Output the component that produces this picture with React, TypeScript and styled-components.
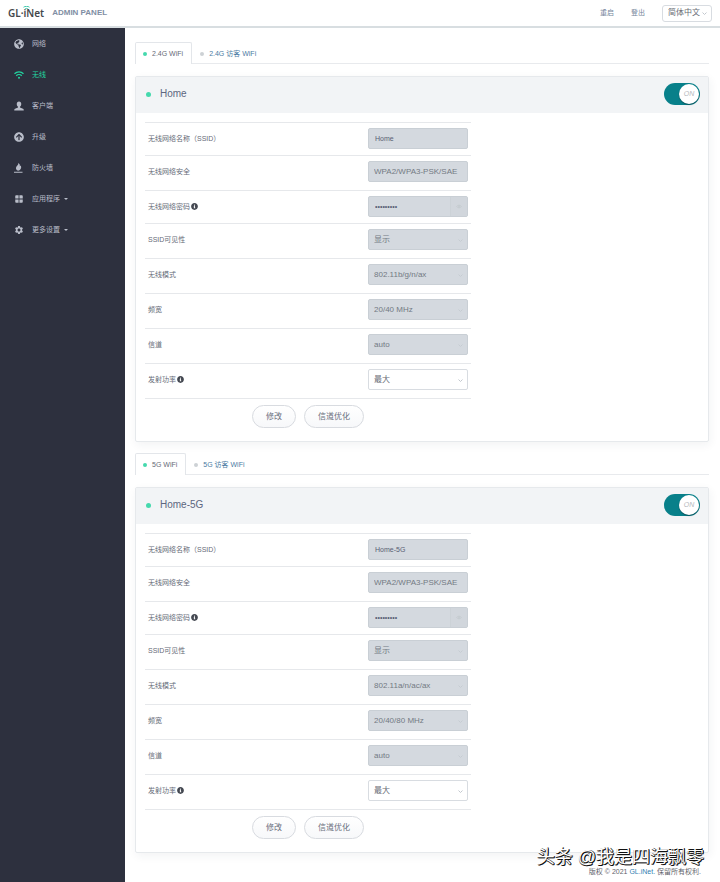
import React, { useState } from "react";
import styled, { createGlobalStyle, css } from "styled-components";
import { FaGlobeAmericas, FaArrowCircleUp, FaInfoCircle } from "react-icons/fa";
import { MdSettings, MdWindow } from "react-icons/md";

const GlobalStyle = createGlobalStyle`
  *, *::before, *::after { box-sizing: border-box; }
  body {
    margin: 0;
    background: #fff;
    color: #666b7c;
    font-family: "Liberation Sans", "Noto Sans CJK SC", sans-serif;
    font-size: 7px;
    line-height: 10px;
  }
  a { text-decoration: none; color: inherit; }
  button, input, select { font: inherit; color: inherit; margin: 0; }
`;

const Page = styled.div`
  position: relative;
  min-height: 100vh;
  display: flex;
  flex-direction: column;
`;

const TopBar = styled.header`
  display: flex;
  align-items: center;
  height: 28px;
  padding: 0 8px;
  background: #fff;
  border-bottom: 2px solid #d8dee1;
`;

const Logo = styled.a`
  position: relative;
  font-family: "Noto Sans", sans-serif;
  font-size: 10px;
  line-height: 12px;
  font-weight: 600;
  color: #44474b;
`;

const Signal = styled.svg`
  position: absolute;
  left: 15px;
  top: -1px;
  width: 7px;
  height: 4px;
`;

const PanelName = styled.span`
  margin-left: 8px;
  font-size: 8px;
  font-weight: 700;
  color: #7f8ea3;
`;

const TopLinks = styled.nav`
  display: flex;
  align-items: center;
  gap: 17px;
  margin-left: auto;
  color: #75859b;
`;

const SelectBox = styled.span<{ $size?: "top" }>`
  position: relative;
  display: block;
  ${(p) => p.$size === "top" && css`width: 50px;`}
`;

const Chevron = styled.svg`
  position: absolute;
  right: 5px;
  top: 50%;
  width: 5px;
  height: 3px;
  margin-top: -1px;
  pointer-events: none;
`;

const Select = styled.select<{ $size?: "top" }>`
  appearance: none;
  display: block;
  width: 100%;
  height: ${(p) => (p.$size === "top" ? "17px" : "21px")};
  padding: 0 0 0 5px;
  border: 1px solid #d8dce1;
  border-radius: ${(p) => (p.$size === "top" ? "3px" : "2px")};
  background: #fff;
  color: #686c75;
  font-size: 8px;
  opacity: 1;
  &:disabled {
    background: #d4d9df;
    border-color: #c9cfd5;
    color: #737983;
  }
`;

const Shell = styled.div`
  flex: 1;
  display: grid;
  grid-template-columns: 125px minmax(0, 1fr);
`;

const SideBar = styled.nav`
  background: #2d303e;
`;

const SideLink = styled.a<{ $active?: boolean }>`
  display: flex;
  align-items: center;
  height: 31px;
  padding-left: 14px;
  gap: 8px;
  color: ${(p) => (p.$active ? "#22d4a0" : "#b9bdc9")};
  svg { width: 10px; height: 10px; flex: none; }
`;

const Caret = styled.i`
  border: 2px solid transparent;
  border-top-color: currentColor;
  border-bottom: 0;
  margin-left: -4px;
`;

const Main = styled.main`
  display: flex;
  flex-direction: column;
  padding: 14px 11px 0 10px;
`;

const Tabs = styled.div`
  display: flex;
  height: 22px;
  border-bottom: 1px solid #e8eaed;
  margin-bottom: 12px;
`;

const Tab = styled.button<{ $active?: boolean }>`
  display: flex;
  align-items: center;
  gap: 5px;
  height: 22px;
  padding: 0 8px 0 7px;
  border: 1px solid transparent;
  border-bottom: 0;
  border-radius: 2px 2px 0 0;
  background: transparent;
  color: #4b7ba3;
  cursor: pointer;
  ${(p) => p.$active && css`
    background: #fff;
    border-color: #e3e6ea;
    color: #666b76;
  `}
`;

const Dot = styled.span<{ $on?: boolean; $large?: boolean }>`
  flex: none;
  width: ${(p) => (p.$large ? "5px" : "4px")};
  height: ${(p) => (p.$large ? "5px" : "4px")};
  border-radius: 50%;
  background: ${(p) => (p.$on ? "#45d9ad" : "#cdd1d5")};
`;

const Card = styled.section`
  border: 1px solid #e6e9ec;
  border-radius: 2px;
  box-shadow: 1px 3px 10px rgba(40, 50, 70, 0.06);
  margin-bottom: 11px;
`;

const CardHead = styled.header`
  display: flex;
  align-items: center;
  gap: 9px;
  height: 36px;
  padding: 0 8px 2px 10px;
  background: #f2f4f6;
`;

const CardTitle = styled.h2`
  margin: 0;
  font-size: 10px;
  line-height: 14px;
  font-weight: 400;
  color: #5d6680;
`;

const Switch = styled.label`
  position: relative;
  display: block;
  width: 36px;
  height: 22px;
  margin-left: auto;
  cursor: pointer;
`;

const SwitchInput = styled.input`
  appearance: none;
  display: block;
  width: 36px;
  height: 22px;
  border-radius: 11px;
  background: #a9b1b8;
  cursor: pointer;
  &:checked { background: #08808a; }
`;

const Knob = styled.span<{ $on: boolean }>`
  position: absolute;
  top: 1px;
  left: ${(p) => (p.$on ? "15px" : "1px")};
  width: 20px;
  height: 20px;
  border-radius: 50%;
  background: #fff;
  box-shadow: 0 1px 1px rgba(0, 35, 45, 0.5);
  color: #b4b8bc;
  font-size: 7px;
  font-style: italic;
  line-height: 20px;
  text-align: center;
`;

const Form = styled.form`
  width: 57%;
  margin: 9px 0 13px 9px;
`;

const Row = styled.div<{ $tall?: boolean }>`
  display: grid;
  grid-template-columns: minmax(0, 1fr) 100px;
  align-items: start;
  height: ${(p) => (p.$tall ? "35px" : "33px")};
  padding: 5px 3px 0;
  border-top: 1px solid #e6e8eb;
`;

const RowLabel = styled.label`
  display: flex;
  align-items: center;
  height: 21px;
  gap: 1px;
  color: #666b78;
  svg { width: 7px; height: 7px; color: #454952; }
`;

const Field = styled.div`
  display: flex;
  height: 21px;
  border: 1px solid #c9cfd5;
  border-radius: 2px;
  background: #d4d9df;
  overflow: hidden;
`;

const TextInput = styled.input`
  flex: 1;
  min-width: 0;
  height: 100%;
  padding: 0 6px;
  border: 0;
  background: transparent;
  color: #596074;
`;

const Reveal = styled.button`
  display: grid;
  place-items: center;
  width: 17px;
  padding: 0;
  border: 0;
  border-left: 1px solid #ccd2d7;
  background: #d1d6dc;
  color: #c3c9cf;
  svg { width: 6px; height: 5px; }
`;

const Actions = styled.div`
  display: flex;
  justify-content: center;
  gap: 8px;
  padding-top: 6px;
  border-top: 1px solid #e6e8eb;
`;

const Pill = styled.button`
  height: 23px;
  padding: 0 13px;
  border: 1px solid #d8dbe0;
  border-radius: 12px;
  background: linear-gradient(#fff, #f7f8fa);
  font-size: 8px;
  color: #6a6f7d;
  cursor: pointer;
`;

const Footer = styled.footer`
  margin-top: auto;
  padding: 0 8px 5px;
  text-align: right;
  color: #5f636a;
  a { color: #337fb2; }
`;

const Stamp = styled.div`
  position: absolute;
  right: 16px;
  bottom: 13px;
  font-size: 18px;
  line-height: 24px;
  white-space: nowrap;
  color: #fff;
  text-shadow: 1px 1px 0 #111, 1px 0 0 #222, 0 1px 0 #333;
  pointer-events: none;
`;

const WifiIcon = () => (
  <svg viewBox="0 0 20 20" fill="none" stroke="currentColor" strokeWidth="2.500" aria-hidden="true">
    <path d="M1 7.500C6 2.700 14 2.700 19 7.500M4.500 11.500c3-3 8-3 11 0" />
    <circle cx="10" cy="15.500" r="2" fill="currentColor" stroke="none" />
  </svg>
);

const UserIcon = () => (
  <svg viewBox="0 0 20 20" fill="currentColor" aria-hidden="true">
    <path d="M10 1c3 0 4.500 2 4.500 5 0 2.500-1.200 4.500-2.500 5.500v1.500l6 2.500c1 .5 1.500 1.500 1.500 3.500H.5c0-2 .5-3 1.500-3.500L8 13v-1.500C6.700 10.500 5.500 8.500 5.500 6 5.500 3 7 1 10 1z" />
  </svg>
);

const FireIcon = () => (
  <svg viewBox="0 0 20 20" fill="currentColor" aria-hidden="true">
    <path d="M8 15.500C3.500 13.500 3 10 5 7c1.500-2 4-3.500 3.500-7C12.500 2.500 12 5 11.500 6.500c1-.3 1.500-1.200 1.500-2.200 3 4.500 1 9.700-5 11.200zM0 17.500h17v2H0z" />
  </svg>
);

const EyeIcon = () => (
  <svg viewBox="0 0 12 9" fill="none" stroke="currentColor" strokeWidth="1.500" aria-hidden="true">
    <path d="M1 4.500C3 1 9 1 11 4.500 9 8 3 8 1 4.500z" />
    <circle cx="6" cy="4.500" r="1.500" />
  </svg>
);

const Down = ({ faint }: { faint?: boolean }) => (
  <Chevron viewBox="0 0 10 6" fill="none" stroke={faint ? "#c6ccd2" : "#c3c8ce"} strokeWidth="2" aria-hidden="true">
    <path d="M1 1l4 4 4-4" />
  </Chevron>
);

const menu = [
  { text: "网络", icon: <FaGlobeAmericas /> },
  { text: "无线", icon: <WifiIcon />, active: true },
  { text: "客户端", icon: <UserIcon /> },
  { text: "升级", icon: <FaArrowCircleUp /> },
  { text: "防火墙", icon: <FireIcon /> },
  { text: "应用程序", icon: <MdWindow />, more: true },
  { text: "更多设置", icon: <MdSettings />, more: true },
];

type Band = { id: string; ssid: string; tabs: string[]; mode: string; width: string };

const bands: Band[] = [
  { id: "b24", ssid: "Home", tabs: ["2.4G WiFi", "2.4G 访客 WiFi"], mode: "802.11b/g/n/ax", width: "20/40 MHz" },
  { id: "b5", ssid: "Home-5G", tabs: ["5G WiFi", "5G 访客 WiFi"], mode: "802.11a/n/ac/ax", width: "20/40/80 MHz" },
];

type SelectRowProps = { id: string; label: string; value: string; info?: boolean; disabled?: boolean; arrow?: boolean };

function SelectRow({ id, label, value, info, disabled = true, arrow = true }: SelectRowProps) {
  return (
    <Row $tall>
      <RowLabel htmlFor={id}>{label}{info && <FaInfoCircle />}</RowLabel>
      <SelectBox>
        <Select id={id} disabled={disabled} defaultValue={value}>
          <option>{value}</option>
        </Select>
        {arrow && <Down faint={disabled} />}
      </SelectBox>
    </Row>
  );
}

function WifiBand({ band }: { band: Band }) {
  const [on, setOn] = useState(true);
  const { id } = band;
  return (
    <>
      <Tabs role="tablist">
        {band.tabs.map((t, i) => (
          <Tab key={t} type="button" role="tab" aria-selected={i === 0} $active={i === 0}>
            <Dot $on={i === 0} />{t}
          </Tab>
        ))}
      </Tabs>
      <Card>
        <CardHead>
          <Dot $on={on} $large />
          <CardTitle>{band.ssid}</CardTitle>
          <Switch>
            <SwitchInput type="checkbox" role="switch" aria-label={band.ssid} checked={on} onChange={() => setOn(!on)} />
            <Knob $on={on}>{on ? "ON" : "OFF"}</Knob>
          </Switch>
        </CardHead>
        <Form onSubmit={(e) => e.preventDefault()}>
          <Row>
            <RowLabel htmlFor={id + "-ssid"}>无线网络名称（SSID）</RowLabel>
            <Field><TextInput id={id + "-ssid"} defaultValue={band.ssid} disabled /></Field>
          </Row>
          <SelectRow id={id + "-sec"} label="无线网络安全" value="WPA2/WPA3-PSK/SAE" arrow={false} />
          <Row>
            <RowLabel htmlFor={id + "-key"}>无线网络密码<FaInfoCircle /></RowLabel>
            <Field>
              <TextInput id={id + "-key"} type="password" autoComplete="off" defaultValue="123456789" disabled />
              <Reveal type="button" aria-label="显示密码" disabled><EyeIcon /></Reveal>
            </Field>
          </Row>
          <SelectRow id={id + "-vis"} label="SSID可见性" value="显示" />
          <SelectRow id={id + "-mode"} label="无线模式" value={band.mode} />
          <SelectRow id={id + "-bw"} label="频宽" value={band.width} />
          <SelectRow id={id + "-ch"} label="信道" value="auto" />
          <SelectRow id={id + "-pow"} label="发射功率" value="最大" info disabled={false} />
          <Actions>
            <Pill type="button">修改</Pill>
            <Pill type="button">信道优化</Pill>
          </Actions>
        </Form>
      </Card>
    </>
  );
}

export default function App() {
  return (
    <Page>
      <GlobalStyle />
      <TopBar>
        <Logo href="#">
          GL·iNet
          <Signal viewBox="0 0 14 8" fill="none" stroke="#3cc7aa" strokeWidth="2" aria-hidden="true">
            <path d="M1 2.500C4 0 10 0 13 2.500M4 6c2-1.500 4-1.500 6 0" />
          </Signal>
        </Logo>
        <PanelName>ADMIN PANEL</PanelName>
        <TopLinks>
          <a href="#reboot">重启</a>
          <a href="#logout">登出</a>
          <SelectBox $size="top">
            <Select $size="top" aria-label="语言" defaultValue="简体中文">
              <option>简体中文</option>
            </Select>
            <Down />
          </SelectBox>
        </TopLinks>
      </TopBar>
      <Shell>
        <SideBar>
          {menu.map((m) => (
            <SideLink key={m.text} href="#" $active={m.active}>
              {m.icon}
              <span>{m.text}</span>
              {m.more && <Caret />}
            </SideLink>
          ))}
        </SideBar>
        <Main>
          {bands.map((b) => <WifiBand key={b.id} band={b} />)}
          <Footer>版权 © 2021 <a href="#">GL.iNet.</a> 保留所有权利.</Footer>
        </Main>
      </Shell>
      <Stamp>头条 @我是四海飘零</Stamp>
    </Page>
  );
}
